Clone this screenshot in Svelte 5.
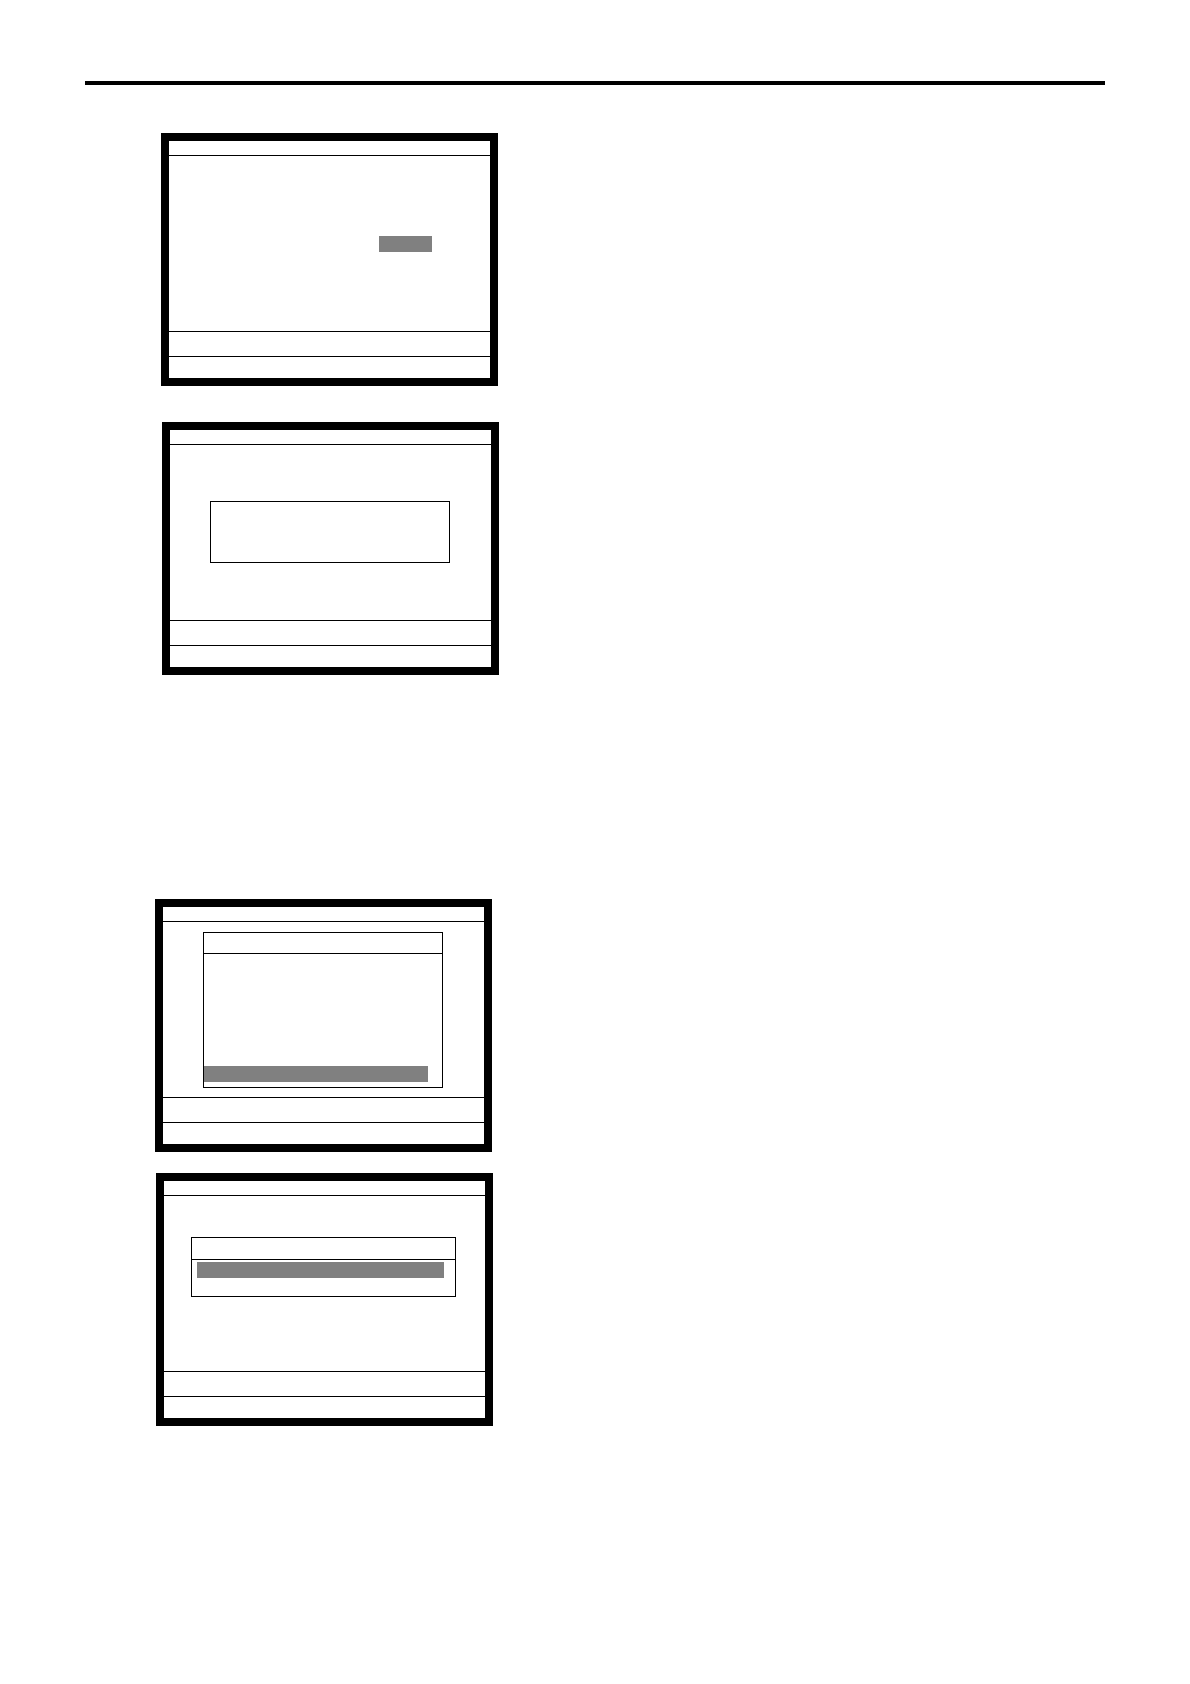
<script lang="ts">
  interface Screen {
    kind: 'field' | 'message' | 'menu' | 'prompt';
    titled?: boolean;
    selected?: boolean;
  }

  interface Group {
    name: string;
    screens: Screen[];
  }

  const groups: Group[] = [
    {
      name: 'entry',
      screens: [{ kind: 'field' }, { kind: 'message' }],
    },
    {
      name: 'selection',
      screens: [
        { kind: 'menu', titled: true, selected: true },
        { kind: 'prompt', titled: true, selected: true },
      ],
    },
  ];
</script>

<main class="page">
  <hr class="rule" />

  {#each groups as group}
    <section class="group {group.name}">
      {#each group.screens as screen}
        <div class="screen">
          <div class="title-bar"></div>
          <div class="body {screen.kind}">
            {#if screen.kind === 'field'}
              <div class="highlight"></div>
            {:else}
              <div class="dialog">
                {#if screen.titled}
                  <div class="dialog-title"></div>
                {/if}
                {#if screen.selected}
                  <div class="highlight"></div>
                {/if}
              </div>
            {/if}
          </div>
          <div class="message-bar"></div>
          <div class="key-bar"></div>
        </div>
      {/each}
    </section>
  {/each}
</main>

<style>
  :global(body) {
    margin: 0;
    background: #fff;
  }

  .page,
  .page * {
    box-sizing: border-box;
  }

  .page {
    min-height: 100vh;
    padding: 81px 85px;
    font-family: "Liberation Sans", Arial, sans-serif;
  }

  .rule {
    height: 4px;
    margin: 0 0 48px;
    border: 0;
    background: #000;
  }

  .group {
    display: flex;
    flex-direction: column;
    align-items: flex-start;
  }

  .entry {
    gap: 36px;
    padding-left: 76px;
  }

  .selection {
    gap: 21px;
    margin-top: 224px;
    padding-left: 70px;
  }

  .screen {
    display: flex;
    flex-direction: column;
    width: 337px;
    max-width: 100%;
    border: 8px solid #000;
  }

  .screen + .screen {
    margin-left: 1px;
  }

  .title-bar {
    height: 15px;
    border-bottom: 1px solid #000;
  }

  .body {
    display: flex;
    flex-direction: column;
    min-height: 175px;
  }

  .message-bar {
    height: 25px;
    border-top: 1px solid #000;
  }

  .key-bar {
    height: 22px;
    border-top: 1px solid #000;
  }

  .highlight {
    height: 16px;
    background: #808080;
  }

  .dialog {
    display: flex;
    flex-direction: column;
    border: 1px solid #000;
  }

  .dialog-title {
    height: 21px;
    border-bottom: 1px solid #000;
  }

  .field {
    align-items: flex-end;
    padding: 80px 58px 0 0;
  }

  .field .highlight {
    width: 53px;
  }

  .message {
    padding: 56px 41px 0 40px;
  }

  .message .dialog {
    min-height: 62px;
  }

  .menu {
    padding: 10px 41px 0 40px;
  }

  .menu .dialog {
    min-height: 156px;
  }

  /* the last entry of the list is the selected one */
  .menu .highlight {
    margin: auto 14px 5px 0;
  }

  .prompt {
    padding: 41px 29px 0 27px;
  }

  .prompt .dialog {
    min-height: 60px;
  }

  .prompt .dialog-title {
    height: 22px;
  }

  .prompt .highlight {
    margin: 2px 11px 0 5px;
  }
</style>
